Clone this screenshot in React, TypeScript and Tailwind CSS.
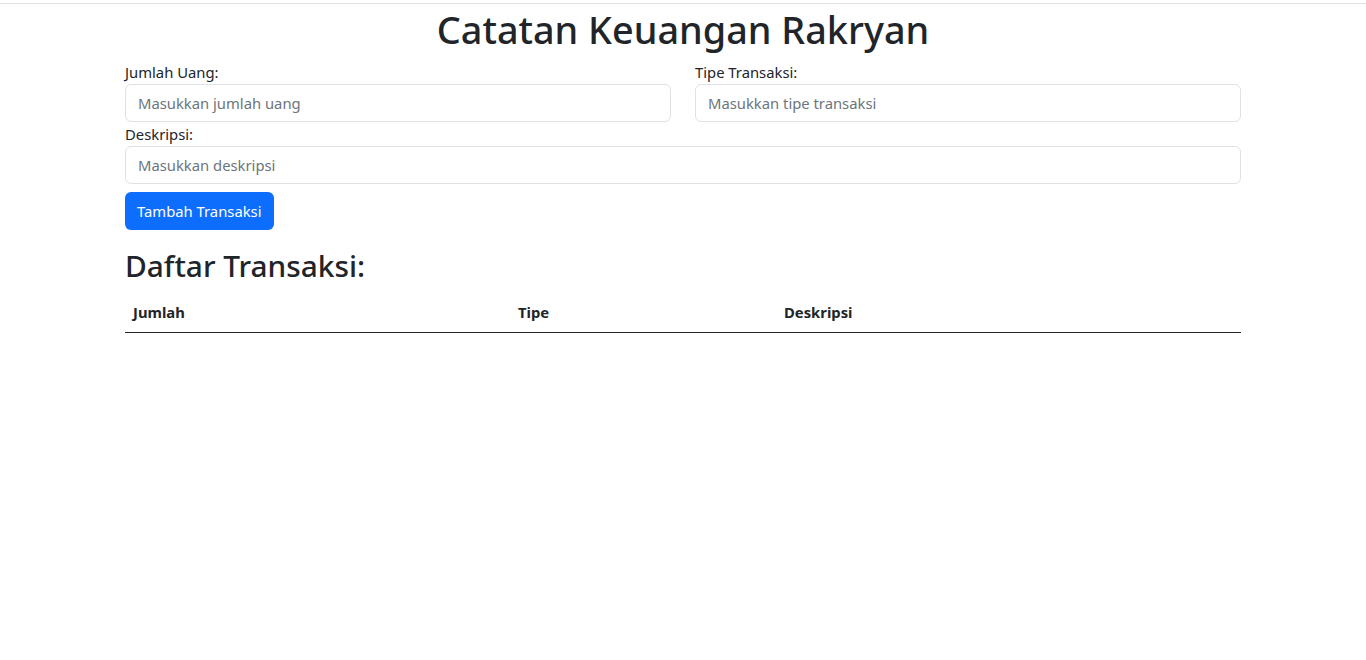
import React from "react";

export default function App() {
  const font = { fontFamily: '"Noto Sans", "Liberation Sans", sans-serif' };
  const inputCls =
    "block w-full h-[38px] border border-[#dee2e6] rounded-[6px] px-3 text-[14.8px] leading-6 text-[#212529] placeholder:text-[#6c757d] outline-none";
  return (
    <div className="min-h-[660px] bg-white text-[#212529]" style={font}>
      <div className="h-[3px]" />
      <div className="h-px bg-[#dee2e6]" />
      <div className="mx-auto w-[1140px] px-3">
        <h1 className="text-center text-[37.8px] leading-[48px] font-medium pt-[2px] mb-[6px]">Catatan Keuangan Rakryan</h1>
        <div className="flex gap-6">
          <div className="flex-1">
            <label className="block text-[14.8px] leading-6">Jumlah Uang:</label>
            <input className={inputCls} placeholder="Masukkan jumlah uang" />
          </div>
          <div className="flex-1">
            <label className="block text-[14.8px] leading-6">Tipe Transaksi:</label>
            <input className={inputCls} placeholder="Masukkan tipe transaksi" />
          </div>
        </div>
        <label className="block text-[14.8px] leading-6">Deskripsi:</label>
        <input className={inputCls} placeholder="Masukkan deskripsi" />
        <button className="mt-2 h-[38px] px-3 rounded-[6px] bg-[#0d6efd] text-white text-[14.8px] leading-6">
          Tambah Transaksi
        </button>
        <h2 className="mt-4 mb-[7px] text-[29.8px] leading-[38px] font-medium pt-px">Daftar Transaksi:</h2>
        <table className="w-full border-collapse">
          <thead>
            <tr className="border-b border-[#212529]">
              <th className="w-[385px] text-left font-bold text-[14.8px] leading-6 p-2">Jumlah</th>
              <th className="w-[266px] text-left font-bold text-[14.8px] leading-6 p-2">Tipe</th>
              <th className="text-left font-bold text-[14.8px] leading-6 p-2">Deskripsi</th>
            </tr>
          </thead>
          <tbody />
        </table>
      </div>
    </div>
  );
}
